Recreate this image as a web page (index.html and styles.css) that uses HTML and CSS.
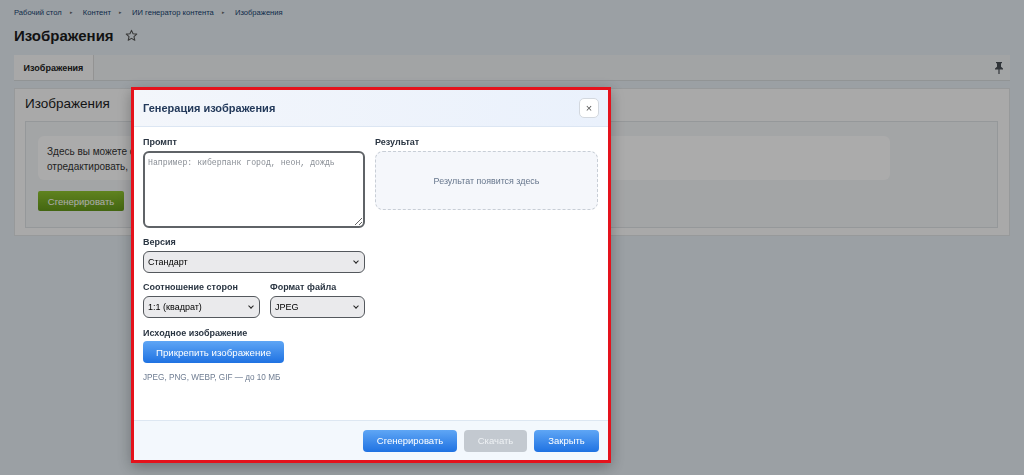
FILE: index.html
```html
<!DOCTYPE html>
<html lang="ru">
<head>
<meta charset="utf-8">
<title>Изображения</title>
<link rel="stylesheet" href="styles.css">
</head>
<body>
<div class="page">
  <nav class="crumbs">
    <a>Рабочий стол</a><span class="sep">▸</span>
    <a>Контент</a><span class="sep">▸</span>
    <a>ИИ генератор контента</a><span class="sep">▸</span>
    <a>Изображения</a>
  </nav>
  <div class="title-row">
    <h1>Изображения</h1>
    <svg class="star" width="13" height="13" viewBox="0 0 24 24"><path d="M12 2.5l2.9 6.3 6.8.7-5.1 4.6 1.5 6.7L12 17.3l-6.1 3.5 1.5-6.7L2.3 9.5l6.8-.7z" fill="none" stroke="#555" stroke-width="2" stroke-linejoin="round"/></svg>
  </div>
  <div class="tabs">
    <div class="tab">Изображения</div>
    <svg class="pin" width="10" height="12" viewBox="0 0 10 12"><path d="M2 0h6v1.2H7v3.6l2 1.8v1H5.6V12H4.4V7.6H1v-1l2-1.8V1.2H2z" fill="#4a4f55"/></svg>
  </div>
  <section class="content">
    <h2>Изображения</h2>
    <div class="inner">
      <div class="msg">Здесь вы можете создавать изображения с помощью ИИ, а также загрузить и<br>отредактировать, по описанию, уже существующее изображение.</div>
      <button class="btn-green">Сгенерировать</button>
    </div>
  </section>
</div>

<div class="overlay"></div>

<div class="modal">
  <div class="modal-head">
    <div class="modal-title">Генерация изображения</div>
    <button class="close">×</button>
  </div>
  <div class="modal-body">
    <div class="col-left">
      <label class="lbl">Промпт</label>
      <textarea class="prompt" placeholder="Например: киберпанк город, неон, дождь"></textarea>
      <label class="lbl">Версия</label>
      <div class="select wide"><span>Стандарт</span><i class="chev"></i></div>
      <div class="pair">
        <div class="field">
          <label class="lbl">Соотношение сторон</label>
          <div class="select"><span>1:1 (квадрат)</span><i class="chev"></i></div>
        </div>
        <div class="field">
          <label class="lbl">Формат файла</label>
          <div class="select"><span>JPEG</span><i class="chev"></i></div>
        </div>
      </div>
      <label class="lbl">Исходное изображение</label>
      <button class="btn-blue attach">Прикрепить изображение</button>
      <div class="hint">JPEG, PNG, WEBP, GIF — до 10 МБ</div>
    </div>
    <div class="col-right">
      <label class="lbl">Результат</label>
      <div class="result">Результат появится здесь</div>
    </div>
  </div>
  <div class="modal-foot">
    <button class="btn-blue gen">Сгенерировать</button>
    <button class="btn-gray">Скачать</button>
    <button class="btn-blue closeb">Закрыть</button>
  </div>
</div>
</body>
</html>
```
FILE: styles.css
```css
* { box-sizing: border-box; }
html, body { margin: 0; height: 100%; }
body {
  font-family: "Liberation Sans", Arial, sans-serif;
  background: #e7eff5;
  color: #222;
  overflow: hidden;
}
.page { padding: 6px 14px 0 14px; }
.crumbs { font-size: 7.6px; color: #163f6e; height: 12px; line-height: 12px; }
.crumbs .sep { font-size: 5px; color: #666; margin: 0 8px; vertical-align: 1px; }
.title-row { display: flex; align-items: center; margin-top: 6px; height: 22px; }
h1 { font-size: 15px; margin: 0; font-weight: bold; color: #1c1c1c; }
.star { margin-left: 11px; }
.tabs {
  margin-top: 9px; height: 26px; display: flex; align-items: stretch;
  justify-content: space-between; background: #f2f5f7; border-bottom: 1px solid #d9dddf;
}
.tab {
  width: 80px; background: #fbfbfb; border-right: 1px solid #dcdcdc;
  font-size: 9px; font-weight: bold; display: flex; align-items: center; justify-content: center;
}
.pin { align-self: center; margin-right: 6px; }
.content {
  margin-top: 7px; background: #fdfdfd; padding: 7px 11px 7px 10px;
  border: 1px solid #e1e4e6; height: 148px;
}
h2 { font-size: 13.5px; font-weight: normal; margin: 0 0 10px 0; color: #1c1c1c; }
.inner { background: #f4f6f8; border: 1px solid #dfe3e6; padding: 14px 12px 15px 12px; height: 107px; }
.msg {
  background: #fff; border-radius: 6px; padding: 8px 9px; font-size: 10px; line-height: 15px;
  color: #333; width: 90%; height: 44px;
}
.btn-green {
  margin-top: 11px; height: 20px; width: 86px; border: none; border-radius: 2px;
  background: linear-gradient(#8fc42f, #65981a); color: #fff; font-family: inherit; font-size: 9.5px;
}
.overlay { position: fixed; inset: 0; background: rgba(0, 0, 0, 0.33); }

.modal {
  position: fixed; left: 131px; top: 87px; width: 480px; height: 376px;
  border: 3px solid #e5121c; background: #fff; display: flex; flex-direction: column;
  box-shadow: 0 4px 14px rgba(0,0,0,0.3);
}
.modal-head {
  height: 37px; flex: none; display: flex; align-items: center; justify-content: space-between;
  padding: 0 9px 0 9px; background: linear-gradient(90deg, #f3f6fb, #eaf1fc);
  border-bottom: 1px solid #dce6f3;
}
.modal-title { font-size: 11px; font-weight: bold; color: #23395a; }
.close {
  width: 20px; height: 20px; border: 1px solid #d3d8df; border-radius: 5px; background: #fff;
  color: #555; font-size: 11px; line-height: 16px; padding: 0; font-family: inherit;
}
.modal-body { flex: 1; display: flex; gap: 10px; padding: 8px 10px 0 9px; }
.col-left { width: 222px; display: flex; flex-direction: column; }
.col-right { flex: 1; display: flex; flex-direction: column; }
.lbl { font-size: 9px; font-weight: bold; color: #2a3542; height: 15px; line-height: 15px; }
.prompt {
  margin-top: 1px; height: 77px; width: 222px; border: 2px solid #5f6367; border-radius: 6px;
  font-family: "Liberation Mono", "DejaVu Sans Mono", monospace; font-size: 8.2px; padding: 5px 3px;
  resize: vertical; margin-bottom: 7px;
}
.prompt::placeholder { color: #8a8f96; }
.select {
  height: 22px; border: 1.5px solid #54585d; border-radius: 6px; background: #eaeaec;
  display: flex; align-items: center; justify-content: space-between; padding: 0 6px 0 4px;
  font-size: 9px; color: #000; margin-top: 1px;
}
.chev {
  width: 4px; height: 4px; border-right: 1.3px solid #222; border-bottom: 1.3px solid #222;
  transform: rotate(45deg); margin-top: -3px;
}
.pair { display: flex; gap: 10px; margin-top: 7px; margin-bottom: 8px; }
.field { display: flex; flex-direction: column; }
.field:first-child { width: 117px; }
.field:last-child { flex: 1; }
.btn-blue {
  border: none; border-radius: 4px; color: #fff; font-family: inherit; font-size: 9.5px;
  background: linear-gradient(#5fa6f5, #1f72e2);
}
.attach { margin-top: 0; width: 141px; height: 22px; font-size: 9.7px; }
.hint { margin-top: 10px; font-size: 8.2px; color: #6f7d92; }
.result {
  margin-top: 1px; height: 59px; border: 1.5px dashed #c8ced6; border-radius: 8px; background: #f5f7fb;
  display: flex; align-items: center; justify-content: center; font-size: 8.9px; color: #66768c;
}
.modal-foot {
  height: 40px; flex: none; background: #f3f8fd; border-top: 1px solid #dde7f2;
  display: flex; justify-content: flex-end; align-items: center; gap: 7px; padding: 0 9px 0 0;
}
.gen { width: 94px; height: 22px; }
.btn-gray {
  width: 63px; height: 22px; border: none; border-radius: 4px; background: #c3c9d0; color: #eef1f4;
  font-family: inherit; font-size: 9.5px;
}
.closeb { width: 65px; height: 22px; }
```
